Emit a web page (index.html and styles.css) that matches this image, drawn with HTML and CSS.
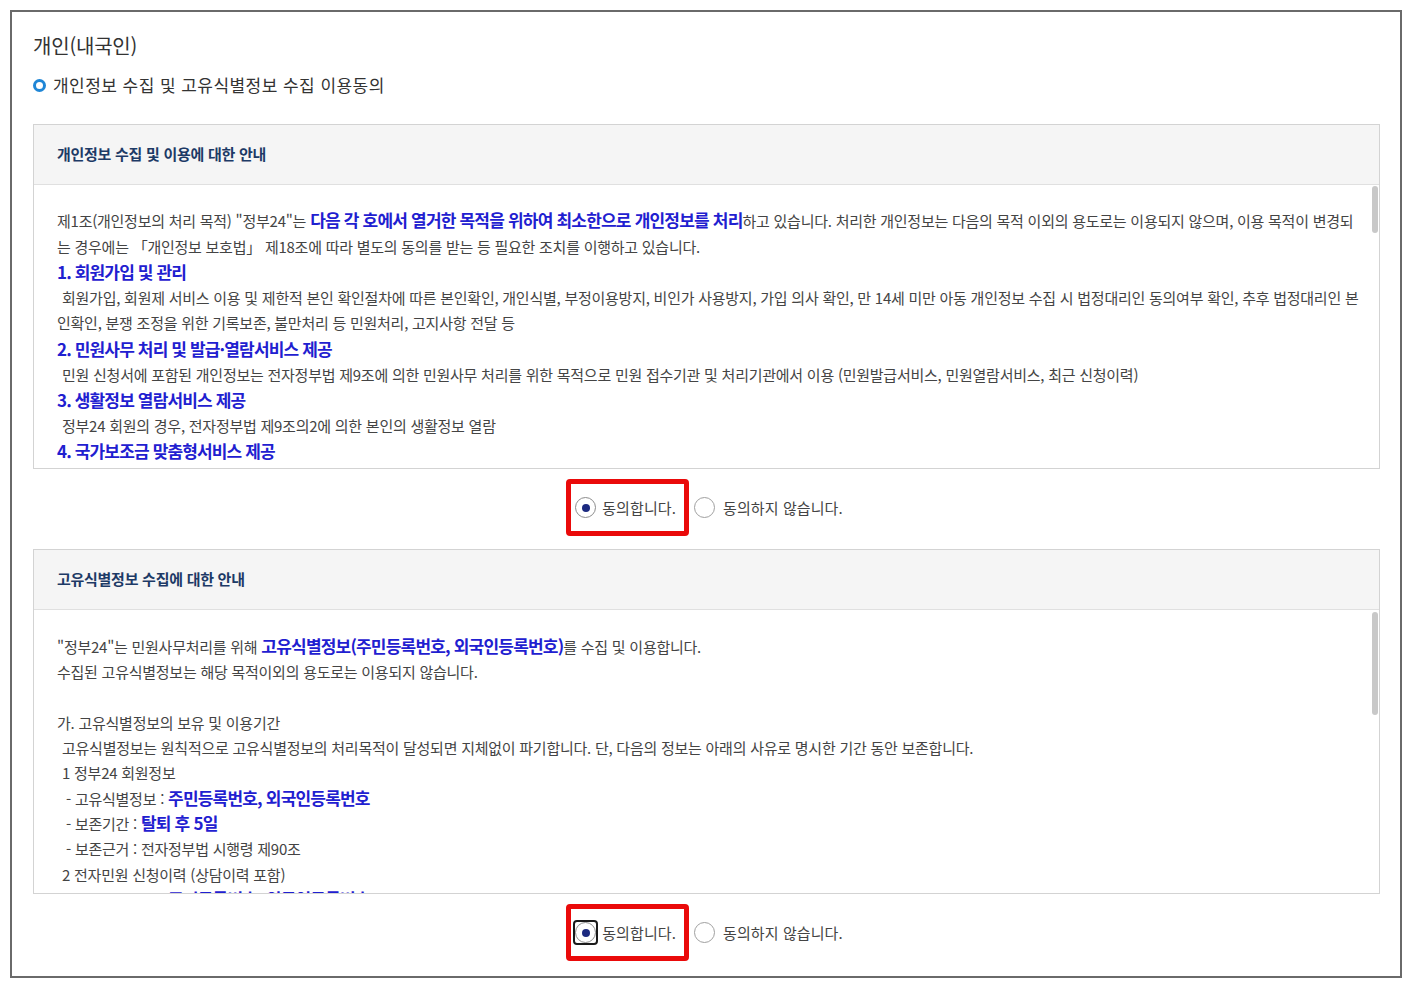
FILE: index.html
```html
<!DOCTYPE html>
<html lang="ko">
<head>
<meta charset="utf-8">
<title>개인(내국인)</title>
<link rel="stylesheet" href="styles.css">
</head>
<body>
<div class="frame">
  <h2 class="page-title">개인(내국인)</h2>
  <h3 class="section-title"><span class="ring"></span>개인정보 수집 및 고유식별정보 수집 이용동의</h3>

  <div class="terms">
    <div class="terms-head">개인정보 수집 및 이용에 대한 안내</div>
    <div class="terms-body">
      <div class="terms-scroll">
        <p>제1조(개인정보의 처리 목적) "정부24"는 <b class="em">다음 각 호에서 열거한 목적을 위하여 최소한으로 개인정보를 처리</b>하고 있습니다. 처리한 개인정보는 다음의 목적 이외의 용도로는 이용되지 않으며, 이용 목적이 변경되는 경우에는 「개인정보 보호법」 제18조에 따라 별도의 동의를 받는 등 필요한 조치를 이행하고 있습니다.</p>
        <p class="item">1. 회원가입 및 관리</p>
        <p class="ind">회원가입, 회원제 서비스 이용 및 제한적 본인 확인절차에 따른 본인확인, 개인식별, 부정이용방지, 비인가 사용방지, 가입 의사 확인, 만 14세 미만 아동 개인정보 수집 시 법정대리인 동의여부 확인, 추후 법정대리인 본인확인, 분쟁 조정을 위한 기록보존, 불만처리 등 민원처리, 고지사항 전달 등</p>
        <p class="item">2. 민원사무 처리 및 발급·열람서비스 제공</p>
        <p class="ind">민원 신청서에 포함된 개인정보는 전자정부법 제9조에 의한 민원사무 처리를 위한 목적으로 민원 접수기관 및 처리기관에서 이용 (민원발급서비스, 민원열람서비스, 최근 신청이력)</p>
        <p class="item">3. 생활정보 열람서비스 제공</p>
        <p class="ind">정부24 회원의 경우, 전자정부법 제9조의2에 의한 본인의 생활정보 열람</p>
        <p class="item">4. 국가보조금 맞춤형서비스 제공</p>
        <p class="ind">국가보조금 맞춤형서비스 신청자의 경우, 보조금 관리에 관한 법률에 의한 수혜 가능 보조금 안내</p>
        <p class="item">5. 전자증명서 발급 및 제출</p>
        <p class="ind">전자증명서 발급 및 제출을 위한 본인확인 및 제출이력 관리</p>
      </div>
      <div class="thumb thumb-one"></div>
    </div>
  </div>

  <div class="agree-row">
    <label class="opt opt-marked"><span class="radio checked"></span>동의합니다.</label>
    <label class="opt opt-plain"><span class="radio"></span>동의하지 않습니다.</label>
  </div>

  <div class="terms">
    <div class="terms-head">고유식별정보 수집에 대한 안내</div>
    <div class="terms-body">
      <div class="terms-scroll terms-scroll-two">
        <p>"정부24"는 민원사무처리를 위해 <b class="em">고유식별정보(주민등록번호, 외국인등록번호)</b>를 수집 및 이용합니다.</p>
        <p>수집된 고유식별정보는 해당 목적이외의 용도로는 이용되지 않습니다.</p>
        <p class="blank">&nbsp;</p>
        <p>가. 고유식별정보의 보유 및 이용기간</p>
        <p class="ind">고유식별정보는 원칙적으로 고유식별정보의 처리목적이 달성되면 지체없이 파기합니다. 단, 다음의 정보는 아래의 사유로 명시한 기간 동안 보존합니다.</p>
        <p class="ind">1 정부24 회원정보</p>
        <p class="ind2">- 고유식별정보 : <b class="em">주민등록번호, 외국인등록번호</b></p>
        <p class="ind2">- 보존기간 : <b class="em">탈퇴 후 5일</b></p>
        <p class="ind2">- 보존근거 : 전자정부법 시행령 제90조</p>
        <p class="ind">2 전자민원 신청이력 (상담이력 포함)</p>
        <p class="ind2">- 고유식별정보 : <b class="em">주민등록번호, 외국인등록번호</b></p>
        <p class="ind2">- 보존기간 : <b class="em">5년</b></p>
        <p class="ind2">- 보존근거 : 민원 처리에 관한 법률 시행령 제46조</p>
      </div>
      <div class="thumb thumb-two"></div>
    </div>
  </div>

  <div class="agree-row">
    <label class="opt opt-marked"><span class="radio checked focus"></span>동의합니다.</label>
    <label class="opt opt-plain"><span class="radio"></span>동의하지 않습니다.</label>
  </div>
</div>
</body>
</html>
```

FILE: styles.css
```css
html, body {
  margin: 0;
  background: #ffffff;
}

body {
  font-family: "Noto Sans CJK KR", "Noto Sans", sans-serif;
  color: #444444;
}

.frame {
  margin: 10px;
  height: 968px;
  box-sizing: border-box;
  border: 2px solid #6a6a6a;
  padding: 20px 20px 0 21px;
  display: flex;
  flex-direction: column;
}

.page-title {
  margin: 0;
  font-size: 20px;
  font-weight: 400;
  line-height: 28px;
  letter-spacing: -0.2px;
  color: #333333;
}

.section-title {
  margin: 12px 0 0;
  font-size: 17px;
  font-weight: 400;
  line-height: 26px;
  letter-spacing: 0.45px;
  color: #333333;
  display: flex;
  align-items: center;
}

.ring {
  width: 13px;
  height: 13px;
  box-sizing: border-box;
  border: 3.5px solid #1f86d6;
  border-radius: 50%;
  margin-right: 7px;
  flex: none;
}

.terms {
  margin-top: 26px;
  border: 1px solid #d3d3d3;
}

.agree-row + .terms {
  margin-top: 0;
}

.terms-head {
  height: 60px;
  box-sizing: border-box;
  padding: 0 0 3px 23px;
  background: #f5f5f5;
  border-bottom: 1px solid #e0e0e0;
  display: flex;
  align-items: center;
  font-size: 15px;
  font-weight: 700;
  letter-spacing: -0.27px;
  color: #1d3a66;
}

.terms-body {
  position: relative;
  height: 283px;
  overflow: hidden;
  background: #ffffff;
}

.terms-scroll {
  padding: 23px 18px 0 23px;
  font-size: 15px;
  line-height: 25.6px;
  letter-spacing: -0.25px;
  color: #444444;
}

.terms-scroll-two {
  padding-top: 24px;
  line-height: 25.3px;
}

.terms-scroll p {
  margin: 0;
}

.terms-scroll .ind {
  text-indent: 5px;
}

.terms-scroll .ind2 {
  text-indent: 9px;
}

.em {
  color: #1f20d0;
  font-weight: 700;
  font-size: 17px;
  line-height: 1;
  letter-spacing: -0.8px;
}

.item {
  color: #1f20d0;
  font-weight: 700;
  font-size: 17px;
  letter-spacing: -0.85px;
}

.thumb {
  position: absolute;
  right: 1px;
  width: 6px;
  border-radius: 3px;
  background: #c8c8c8;
}

.thumb-one {
  top: 1px;
  height: 47px;
}

.thumb-two {
  top: 2px;
  height: 103px;
}

.agree-row {
  height: 80px;
  flex: none;
  display: flex;
  justify-content: center;
  align-items: center;
  padding: 0 4px 3px 0;
  box-sizing: border-box;
}

.opt {
  display: flex;
  align-items: center;
  font-size: 15px;
  letter-spacing: 0.1px;
  color: #444444;
}

.opt-marked {
  height: 57px;
  box-sizing: border-box;
  border: 5px solid #ea0a0a;
  border-radius: 4px;
  padding: 0 8px 0 4px;
}

.opt-plain {
  margin-left: 5px;
}

.radio {
  position: relative;
  width: 21px;
  height: 21px;
  box-sizing: border-box;
  border: 1px solid #a0a0a0;
  border-radius: 50%;
  background: #ffffff;
  margin-right: 6px;
  flex: none;
  display: flex;
  align-items: center;
  justify-content: center;
}

.opt-plain .radio {
  margin-right: 8px;
}

.radio.checked {
  border-color: #8c8c8c;
}

.radio.checked::after {
  content: "";
  width: 8px;
  height: 8px;
  border-radius: 50%;
  background: #1c2a80;
}

.radio.focus::before {
  content: "";
  position: absolute;
  left: -3px;
  top: -3px;
  right: -3px;
  bottom: -3px;
  border: 2px solid #1a1a1a;
  border-radius: 4px;
}
```
